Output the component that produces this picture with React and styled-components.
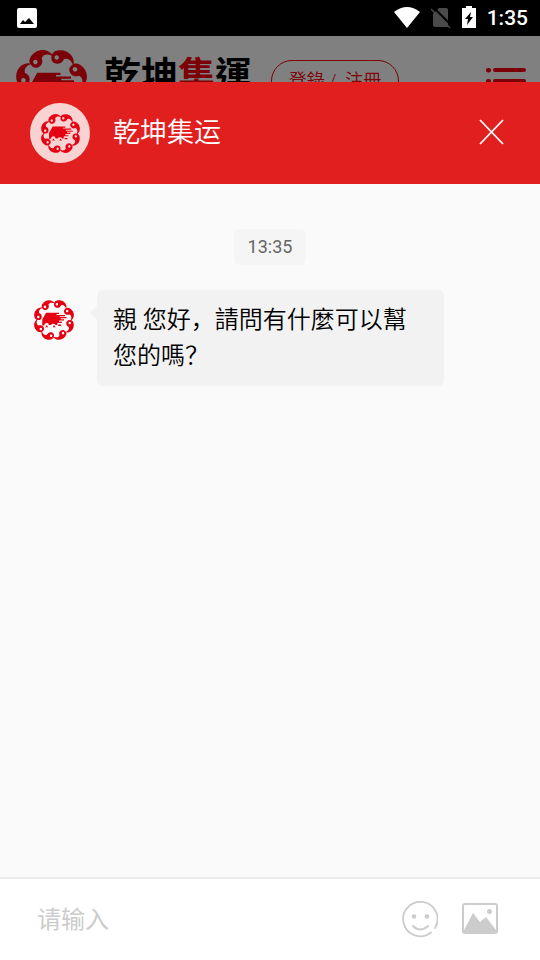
import React, { useState } from 'react';
import styled, { createGlobalStyle } from 'styled-components';

const GlobalStyle = createGlobalStyle`
    * {
        box-sizing: border-box;
    }

    body {
        margin: 0;
        font-family: Roboto, 'Noto Sans CJK SC', sans-serif;
        background: #fafafa;
    }
`;

const Page = styled.div`
    display: flex;
    flex-direction: column;
    min-height: 100vh;
`;

const StatusBar = styled.div`
    display: flex;
    align-items: center;
    justify-content: space-between;
    height: 36px;
    padding: 0 12px 0 17px;
    background: #000;
    color: #fff;
`;

const StatusIcons = styled.div`
    display: flex;
    align-items: center;
    gap: 11px;

    svg {
        margin-bottom: 2px;
    }
`;

const Clock = styled.time`
    font-size: 21px;
    font-weight: 500;
    line-height: 38px;
`;

const SiteHeader = styled.header`
    display: flex;
    align-items: flex-start;
    height: 46px;
    padding: 12px 14px 0;
    overflow: hidden;
    background: #808080;
    color: #7c0008;
`;

const SiteName = styled.h1`
    flex: 1;
    margin: 0 0 0 15px;
    color: #000;
    font-family: 'Noto Sans CJK TC', sans-serif;
    font-size: 37px;
    font-weight: 700;
    line-height: 50px;
    white-space: nowrap;

    span {
        color: #7c0008;
    }
`;

const LoginLink = styled.a`
    width: 128px;
    height: 42px;
    margin: 12px 86px 0 0;
    border: 1px solid #7c0008;
    border-radius: 21px;
    color: #7c0008;
    font-family: Roboto, 'Noto Sans CJK TC', sans-serif;
    font-size: 18px;
    font-weight: 350;
    line-height: 40px;
    text-align: center;
    text-decoration: none;
    white-space: pre;
`;

const IconButton = styled.button`
    display: flex;
    padding: 0;
    border: none;
    background: transparent;
    color: ${({ $color }) => $color || '#ccc'};
    cursor: pointer;
`;

const MenuButton = styled(IconButton)`
    margin-top: 20px;
`;

const ChatHeader = styled.header`
    display: flex;
    align-items: center;
    height: 102px;
    padding: 0 35px 0 30px;
    background: #e21f1f;
    color: #fff;
`;

const Avatar = styled.div`
    display: flex;
    align-items: center;
    justify-content: center;
    width: 60px;
    height: 60px;
    border-radius: 50%;
    background: #f9d2d2;
`;

const ChatTitle = styled.h2`
    flex: 1;
    margin: 0 0 0 23px;
    font-size: 27px;
    font-weight: 350;
    line-height: 40px;
`;

const CloseButton = styled(IconButton)`
    margin-bottom: 3px;
`;

const Messages = styled.main`
    display: flex;
    flex: 1;
    flex-direction: column;
    padding: 45px 33px 0;
    background: #fafafa;
`;

const TimeStamp = styled.time`
    align-self: center;
    padding: 0 14px;
    border-radius: 6px;
    background: #f5f5f5;
    color: #666;
    font-size: 18px;
    line-height: 36px;
`;

const Message = styled.div`
    display: flex;
    align-items: flex-start;
    gap: 22px;
    margin-top: 25px;

    > svg {
        flex: none;
        margin-top: 9px;
    }
`;

const Bubble = styled.p`
    position: relative;
    max-width: 347px;
    margin: 0;
    padding: 12px 16px;
    border-radius: 6px;
    background: #f2f2f2;
    color: #000;
    font-size: 24px;
    font-weight: 350;
    line-height: 36px;

    &::before {
        content: '';
        position: absolute;
        top: 16px;
        left: -7px;
        border: solid transparent;
        border-width: 7px 7px 7px 0;
        border-right-color: #f2f2f2;
    }
`;

const Composer = styled.form`
    display: flex;
    align-items: center;
    gap: 24px;
    height: 83px;
    padding: 0 42px 0 37px;
    border-top: 2px solid #ececec;
    background: #fff;
`;

const MessageInput = styled.input`
    flex: 1;
    min-width: 0;
    padding: 0;
    border: none;
    outline: none;
    background: transparent;
    font-family: inherit;
    font-size: 24px;
    line-height: 36px;

    &::placeholder {
        color: #ccc;
        opacity: 1;
    }
`;

const beads = [-33, 12, 57, 102, 147, 192, 237, 282];

const Emblem = ({ size, color = '#e50012' }) => (
    <svg width={size} height={size} viewBox="-50 -50 100 100" fill={color} aria-hidden="true">
        {beads.map((angle) => (
            <path
                key={angle}
                transform={`rotate(${angle})`}
                fillRule="evenodd"
                d="M-8 -38C-9 -45 -2 -49 7 -49C17 -48 24 -41 23 -31C20 -38 14 -41 9 -38C8 -33 5 -30 0 -30C-5 -30 -8 -33 -8 -38ZM-4 -38A3 3 0 1 0 2 -38A3 3 0 1 0 -4 -38Z"
            />
        ))}
        <path d="M-19 -17H12V-14H6V-12H26V-9H13V-7H30V-4H16V-2H24V1H12V4H19V7H8V12H4A6 5 0 0 0 -7 12H-12A5 5 0 0 0 -23 13H-28V-1Z" />
        <path d="M-21 17L-17 12L-14 17ZM-3 17L0 12L4 17ZM10 11H17V14H10Z" />
    </svg>
);

const PictureStatusIcon = () => (
    <svg width="20" height="20" viewBox="0 0 20 20" aria-hidden="true">
        <rect width="20" height="20" rx="2" fill="#fff" />
        <path d="M3 16L6 12L8 14L12 10L17 16Z" fill="#000" />
    </svg>
);

const WifiIcon = () => (
    <svg width="26" height="21" viewBox="0 0 26 21" fill="#fff" aria-hidden="true">
        <path d="M0 5Q13 -5 26 5L13 21Z" />
    </svg>
);

const NoSimIcon = () => (
    <svg width="20" height="21" viewBox="0 0 20 21" aria-hidden="true">
        <path d="M8 1H15Q17 1 17 3V20H4Q2 20 2 18V7Z" fill="#4a4a4a" />
        <path d="M1 -1L20 18" stroke="#000" strokeWidth="2" />
        <path d="M0 2L19 21" stroke="#4a4a4a" strokeWidth="1.5" />
    </svg>
);

const BatteryIcon = () => (
    <svg width="14" height="22" viewBox="0 0 14 22" aria-hidden="true">
        <path d="M4 0H10V2H14V22H0V2H4Z" fill="#fff" />
        <path d="M9 6L3 13H6L5 19L11 11H8Z" fill="#000" />
    </svg>
);

const MenuIcon = () => (
    <svg width="41" height="29" viewBox="0 0 41 29" fill="currentColor" aria-hidden="true">
        {[0, 11, 22].map((y) => (
            <g key={y}>
                <rect y={y} x="1" width="5" height="4.5" rx="2" />
                <rect y={y} x="8" width="33" height="4" rx="2" />
            </g>
        ))}
    </svg>
);

const CloseIcon = () => (
    <svg width="27" height="27" viewBox="0 0 27 27" stroke="currentColor" strokeWidth="1.8" aria-hidden="true">
        <path d="M2 2L25 26M25 2L2 26" />
    </svg>
);

const SmileIcon = () => (
    <svg width="36" height="38" viewBox="0 0 36 38" aria-hidden="true">
        <path
            d="M29 31.5A17.2 17.2 0 1 1 33 27"
            fill="none"
            stroke="currentColor"
            strokeWidth="1.8"
            strokeLinecap="round"
        />
        <circle cx="12" cy="15.5" r="2.3" fill="currentColor" />
        <circle cx="25" cy="15.5" r="2.3" fill="currentColor" />
        <path d="M11 25Q18 32 26 25" fill="none" stroke="currentColor" strokeWidth="2" strokeLinecap="round" />
    </svg>
);

const PictureIcon = () => (
    <svg width="36" height="34" viewBox="0 0 36 34" aria-hidden="true">
        <rect x="1" y="1" width="34" height="29" rx="2" fill="none" stroke="currentColor" strokeWidth="2" />
        <path d="M2 27L11 10L18 19L24 14L34 27V30H2Z" fill="currentColor" />
        <circle cx="27.5" cy="8.5" r="2.5" fill="currentColor" />
    </svg>
);

const App = () => {
    const [text, setText] = useState('');

    return (
        <Page>
            <GlobalStyle />
            <StatusBar>
                <PictureStatusIcon />
                <StatusIcons>
                    <WifiIcon />
                    <NoSimIcon />
                    <BatteryIcon />
                    <Clock>1:35</Clock>
                </StatusIcons>
            </StatusBar>
            <SiteHeader>
                <Emblem size={75} color="#7c0008" />
                <SiteName>
                    乾坤<span>集</span>運
                </SiteName>
                <LoginLink href="#login">登錄 /  注冊</LoginLink>
                <MenuButton type="button" aria-label="Menu" $color="#7c0008">
                    <MenuIcon />
                </MenuButton>
            </SiteHeader>
            <ChatHeader>
                <Avatar>
                    <Emblem size={41} />
                </Avatar>
                <ChatTitle>乾坤集运</ChatTitle>
                <CloseButton type="button" aria-label="Close" $color="#fff">
                    <CloseIcon />
                </CloseButton>
            </ChatHeader>
            <Messages>
                <TimeStamp>13:35</TimeStamp>
                <Message>
                    <Emblem size={42} />
                    <Bubble>親 您好，請問有什麼可以幫您的嗎？</Bubble>
                </Message>
            </Messages>
            <Composer onSubmit={(e) => e.preventDefault()}>
                <MessageInput
                    type="text"
                    aria-label="请输入"
                    placeholder="请输入"
                    value={text}
                    onChange={(e) => setText(e.target.value)}
                />
                <IconButton type="button" aria-label="Emoji">
                    <SmileIcon />
                </IconButton>
                <IconButton type="button" aria-label="Picture">
                    <PictureIcon />
                </IconButton>
            </Composer>
        </Page>
    );
};

export default App;
